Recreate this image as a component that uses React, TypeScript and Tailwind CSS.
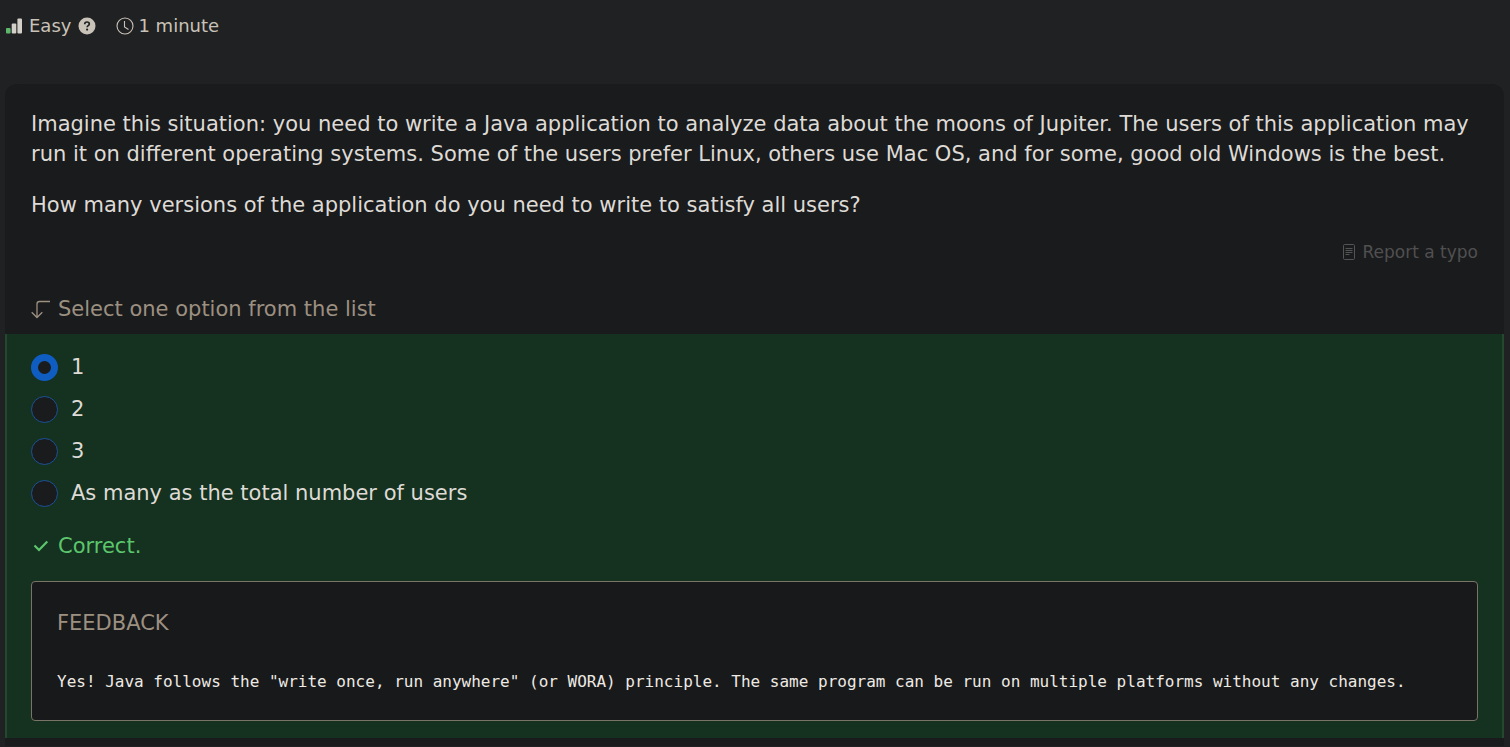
import { useState } from "react";

const options = ["1", "2", "3", "As many as the total number of users"];

function LevelIcon() {
  return (
    <svg width="16" height="16" viewBox="0 0 16 16" aria-hidden="true">
      <rect x="0" y="10" width="4.600" height="5.500" rx="1" fill="#5cb86b" />
      <rect x="5.700" y="5.500" width="4.600" height="10" rx="1" fill="#d3cfc9" />
      <rect x="11.400" y=".5" width="4.600" height="15" rx="1" fill="#d3cfc9" />
    </svg>
  );
}

function HelpIcon() {
  return (
    <svg width="18" height="18" viewBox="0 0 18 18" aria-hidden="true">
      <circle cx="9" cy="9" r="8.500" fill="#c9c2b8" />
      <path d="M6.700 7.200C6.700 5.800 7.700 5 9 5s2.300.8 2.300 2c0 1.600-2.200 1.700-2.200 3.300" fill="none" stroke="#202122" strokeWidth="1.700" />
      <circle cx="9.100" cy="12.600" r="1.100" fill="#202122" />
    </svg>
  );
}

function ClockIcon() {
  return (
    <svg width="18" height="18" viewBox="0 0 18 18" fill="none" stroke="#c9c2b8" strokeWidth="1.100" aria-hidden="true">
      <circle cx="9" cy="9" r="8" />
      <path d="M8.500 4v6l4 2.500" />
    </svg>
  );
}

function DocumentIcon() {
  return (
    <svg width="12" height="16" viewBox="0 0 12 16" fill="none" stroke="#545454" strokeWidth="1" aria-hidden="true">
      <rect x=".5" y=".5" width="11" height="15" rx="1.200" />
      <path d="M2.500 4.500h7M2.500 6.500h7M2.500 8.500h7M2.500 10.500h4" />
    </svg>
  );
}

function TurnDownIcon() {
  return (
    <svg width="20" height="19" viewBox="0 0 20 19" fill="none" stroke="#9c9081" strokeWidth="1.300" aria-hidden="true">
      <path d="M19 1.500H8.500Q6 1.500 6 4v13.500M.7 12.200 6 17.500l5.300-5.300" />
    </svg>
  );
}

function CheckIcon() {
  return (
    <svg width="16" height="12" viewBox="0 0 16 12" fill="none" stroke="#5cc66d" strokeWidth="2.200" aria-hidden="true">
      <path d="M1.500 5.500 6 10l8.300-8.500" />
    </svg>
  );
}

export default function App() {
  const [selected, setSelected] = useState("1");

  return (
    <div className="min-h-screen bg-[#202122] px-[5px] font-['DejaVu_Sans',sans-serif] text-[#dedad5]">
      <header className="flex h-[84px] items-start gap-5 pt-[11px] pl-px text-lg leading-[30px] text-[#c9c2b8]">
        <div className="flex items-center gap-[7px]">
          <LevelIcon />
          <span>Easy</span>
          <button type="button" aria-label="About difficulty">
            <HelpIcon />
          </button>
        </div>
        <div className="flex items-center gap-1">
          <ClockIcon />
          <span>1 minute</span>
        </div>
      </header>

      <main className="mr-px rounded-t-xl bg-[#1a1b1d] pb-2 text-[21px] leading-[30px]">
        <section className="px-[26px] pt-[25px]">
          <p>
            Imagine this situation: you need to write a Java application to analyze data about the moons of Jupiter. The users of this application may run it on different operating systems. Some of the users prefer Linux, others use Mac OS, and for some, good old Windows is the best.
          </p>
          <p className="mt-[21px]">How many versions of the application do you need to write to satisfy all users?</p>
          <div className="mt-[17px] flex justify-end">
            <a href="#report" className="flex items-center gap-2 text-[17px] leading-[30px] text-[#505050]">
              <DocumentIcon />
              Report a typo
            </a>
          </div>
          <h2 id="question-hint" className="mt-[27px] flex items-center gap-[7px] pb-[10px] text-[#9c9081]">
            <TurnDownIcon />
            Select one option from the list
          </h2>
        </section>

        <section className="border-x-2 border-[#24482e] bg-[#15311f] px-6 pt-5 pb-[17px]">
          <fieldset aria-labelledby="question-hint" className="flex flex-col gap-[15px]">
            {options.map((option) => (
              <label key={option} className="flex items-center gap-[13px] leading-[27px]">
                <input
                  type="radio"
                  name="answer"
                  value={option}
                  checked={selected === option}
                  onChange={() => setSelected(option)}
                  className="size-[27px] shrink-0 appearance-none rounded-full border border-[#1b5299] bg-[#1a1b1d] checked:border-[7px] checked:border-[#0f5dc0]"
                />
                {option}
              </label>
            ))}
          </fieldset>
          <p className="mt-6 flex items-center gap-[9px] pl-[2px] text-[#5cc66d]">
            <CheckIcon />
            Correct.
          </p>
          <div className="mt-5 rounded border border-[#7a7466] bg-[#18191b] px-[25px] pt-[26px] pb-[23px]">
            <h3 className="text-[#9c9081]">FEEDBACK</h3>
            <p className="mt-[29px] font-['DejaVu_Sans_Mono',monospace] text-base leading-[30px] text-[#eeeae4]">
              Yes! Java follows the "write once, run anywhere" (or WORA) principle. The same program can be run on multiple platforms without any changes.
            </p>
          </div>
        </section>
      </main>
    </div>
  );
}
